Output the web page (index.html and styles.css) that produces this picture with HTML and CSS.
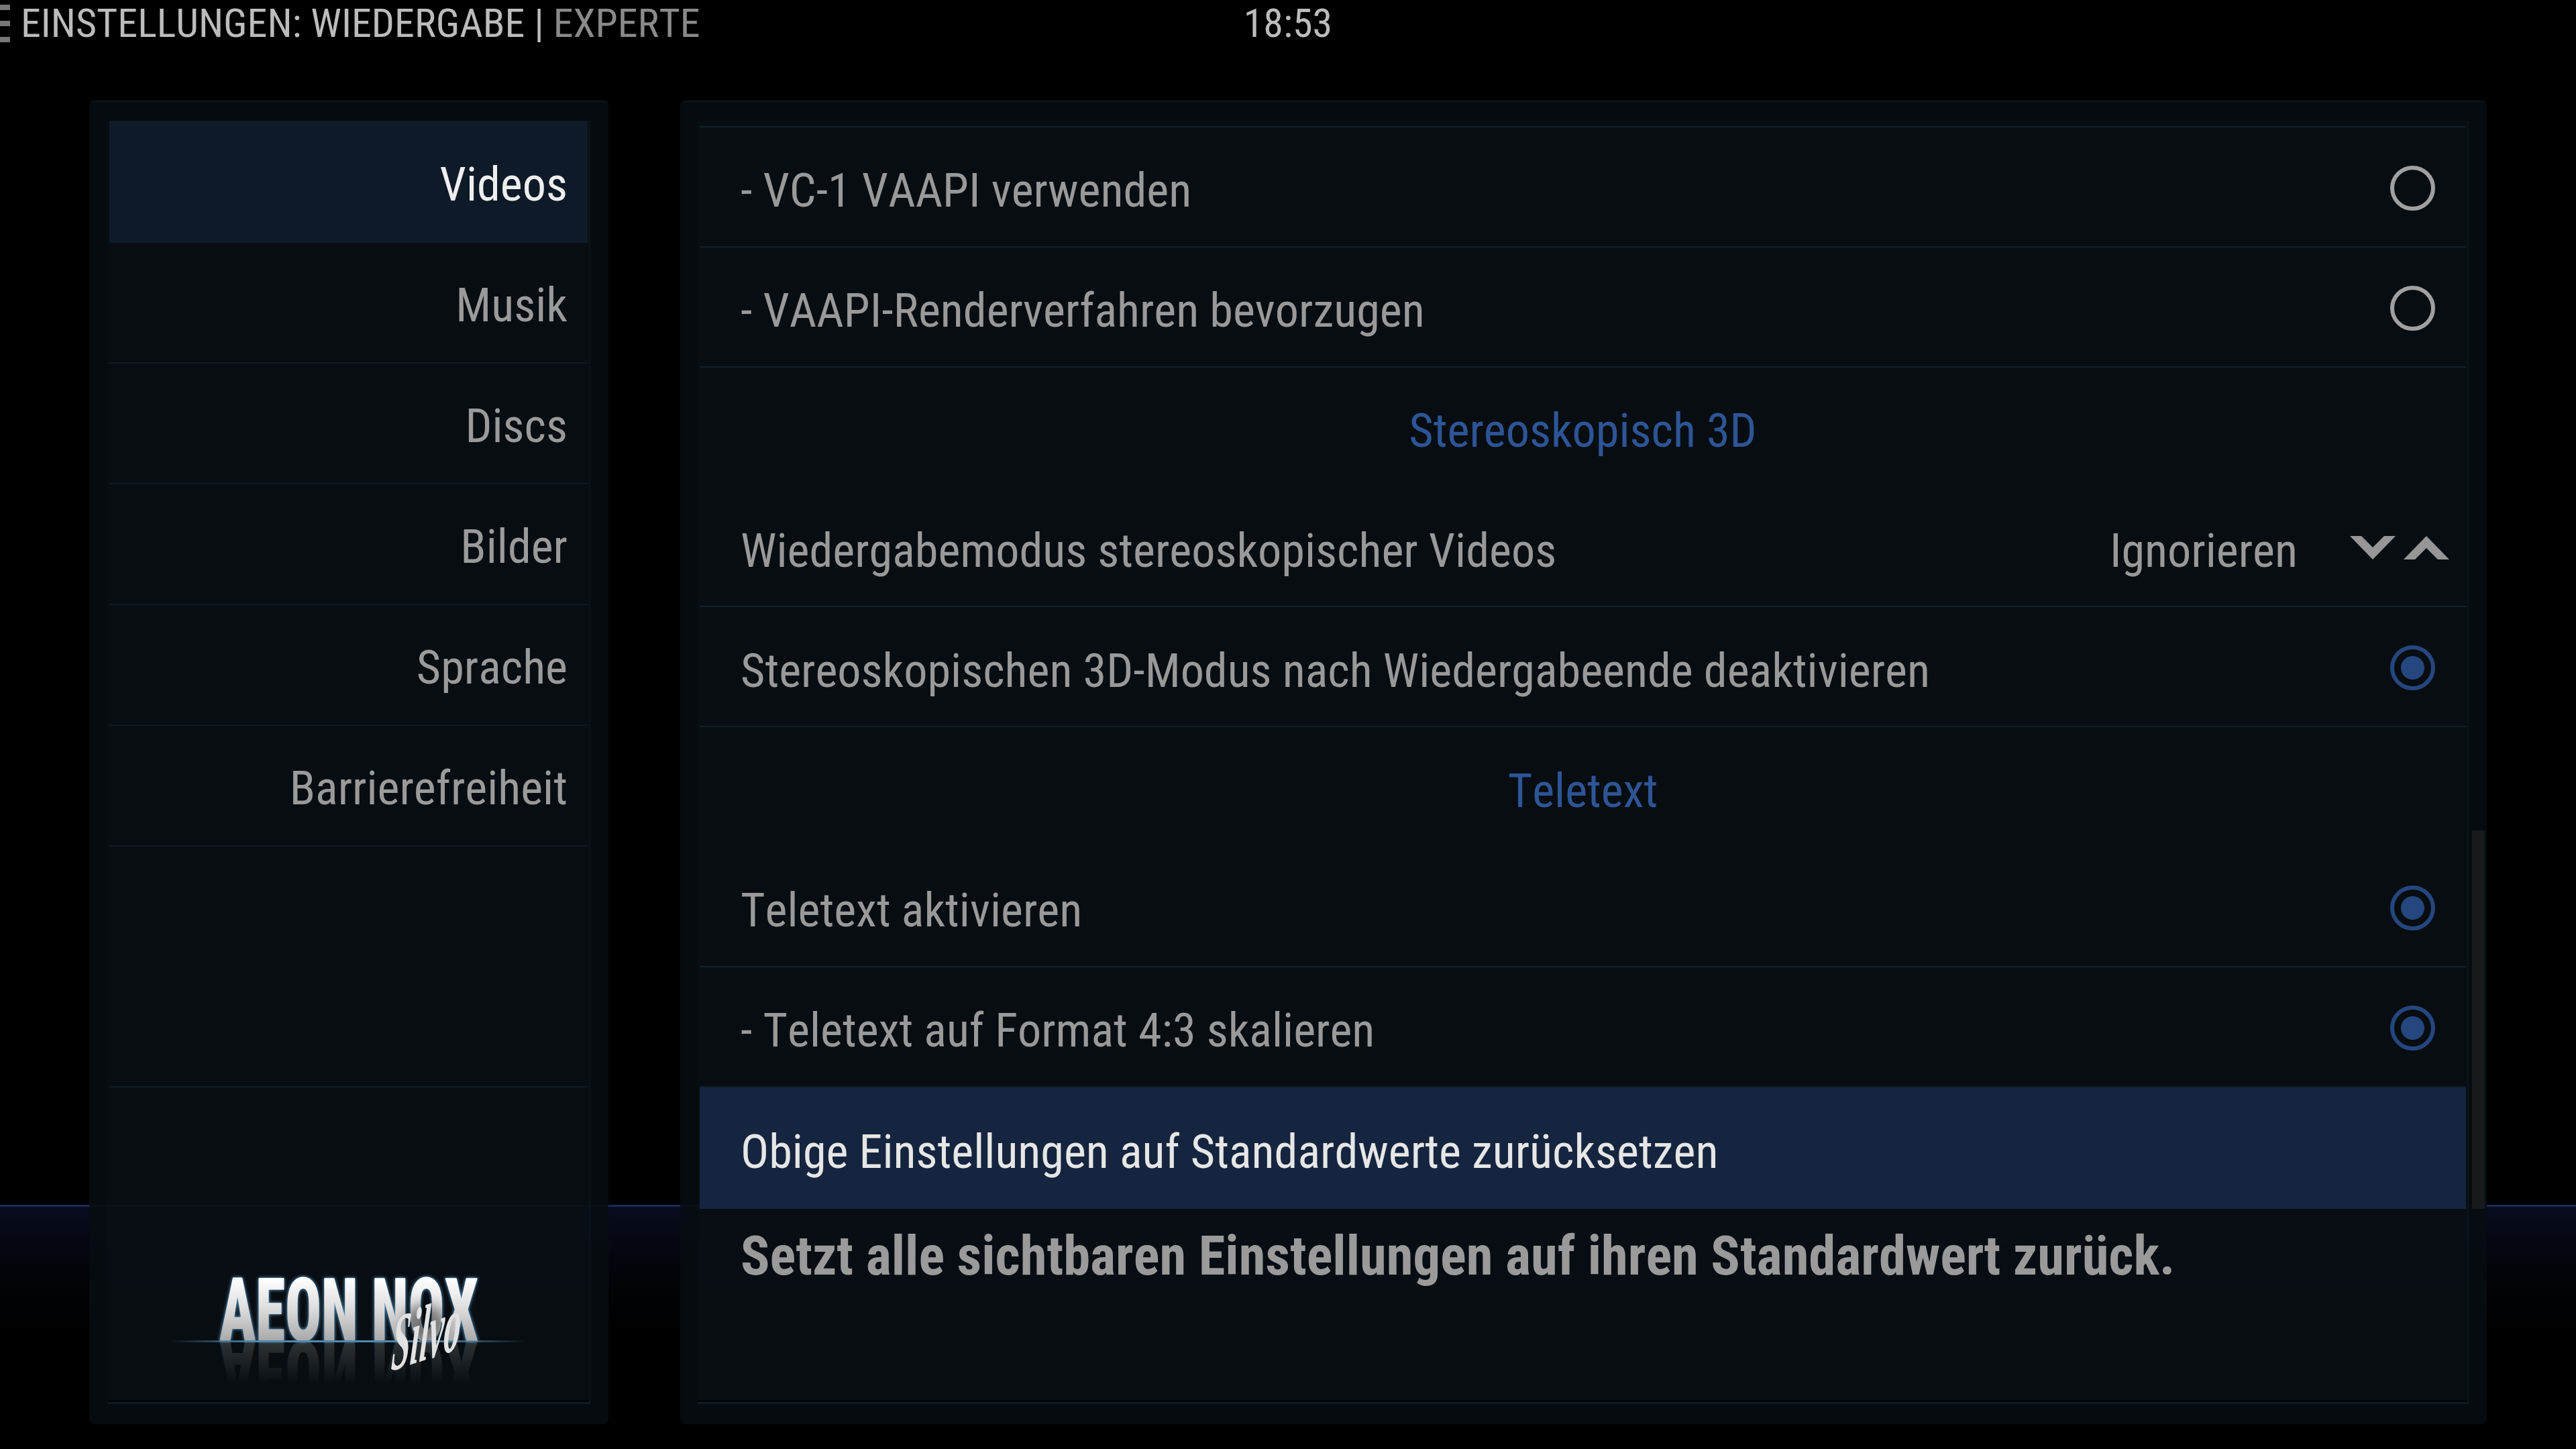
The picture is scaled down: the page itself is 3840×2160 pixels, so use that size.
FILE: index.html
```html
<!DOCTYPE html>
<html lang="de">
<head>
<meta charset="utf-8">
<title>Einstellungen: Wiedergabe</title>
<link rel="stylesheet" href="styles.css">
</head>
<body>
<header class="topbar">
  <div class="topbar-left">
    <div class="burger"><i></i><i></i><i></i></div>
    <div class="title">EINSTELLUNGEN: WIEDERGABE <span class="title-sep">|</span> <span class="title-dim">EXPERTE</span></div>
  </div>
  <div class="clock">18:53</div>
  <div></div>
</header>
<main class="stage">
  <aside class="panel panel-side">
    <div class="box">
      <nav class="menu">
        <div class="menu-item is-active">Videos</div>
        <div class="menu-item">Musik</div>
        <div class="menu-item">Discs</div>
        <div class="menu-item">Bilder</div>
        <div class="menu-item">Sprache</div>
        <div class="menu-item">Barrierefreiheit</div>
        <div class="menu-item menu-blank"></div>
      </nav>
      <svg class="logo" viewBox="163 1619 714 474" aria-label="Aeon Nox Silvo">
        <defs>
          <linearGradient id="face" x1="0" y1="1903" x2="0" y2="1997" gradientUnits="userSpaceOnUse">
            <stop offset="0" stop-color="#ffffff"/><stop offset=".45" stop-color="#e0e0e0"/><stop offset="1" stop-color="#a8a8a8"/>
          </linearGradient>
          <linearGradient id="mirror" x1="0" y1="1997" x2="0" y2="1933" gradientUnits="userSpaceOnUse">
            <stop offset="0" stop-color="#2e3336"/><stop offset="1" stop-color="#2e3336" stop-opacity="0"/>
          </linearGradient>
          <linearGradient id="beam" x1="252" y1="0" x2="783" y2="0" gradientUnits="userSpaceOnUse">
            <stop offset="0" stop-color="#4f89ad" stop-opacity="0"/><stop offset=".25" stop-color="#4f89ad"/><stop offset=".75" stop-color="#4f89ad"/><stop offset="1" stop-color="#4f89ad" stop-opacity="0"/>
          </linearGradient>
          <filter id="glow" x="-10%" y="-20%" width="120%" height="140%"><feDropShadow dx="0" dy="0" stdDeviation="2.5" flood-color="#5fb4ea"/></filter>
          <filter id="soft" x="-50%" y="-50%" width="200%" height="200%"><feGaussianBlur stdDeviation="9"/></filter>
        </defs>
        <text class="logo-word" transform="translate(0 3994) scale(1 -1)" x="327" y="1997" textLength="386" lengthAdjust="spacingAndGlyphs" fill="url(#mirror)">AEON NOX</text>
        <text class="logo-word" x="327" y="1997" textLength="386" lengthAdjust="spacingAndGlyphs" fill="url(#face)" filter="url(#glow)">AEON NOX</text>
        <rect x="252" y="1996" width="531" height="3" fill="url(#beam)"/>
        <ellipse cx="633" cy="1968" rx="30" ry="26" fill="#000" opacity=".4" filter="url(#soft)"/>
        <text class="logo-script" transform="translate(582 2042) rotate(-18) skewX(-22)" textLength="108" lengthAdjust="spacingAndGlyphs" fill="#e2e2e2">Silvo</text>
      </svg>
    </div>
  </aside>
  <section class="panel panel-main">
    <div class="box box-main">
      <div class="rows">
        <div class="row"><span class="label">- VC-1 VAAPI verwenden</span><span class="radio"></span></div>
        <div class="row"><span class="label">- VAAPI-Renderverfahren bevorzugen</span><span class="radio"></span></div>
        <div class="row row-head"><span class="label">Stereoskopisch 3D</span></div>
        <div class="row row-value">
          <span class="label">Wiedergabemodus stereoskopischer Videos</span>
          <span class="label-value">Ignorieren</span>
          <svg class="chevrons" viewBox="0 0 148 35"><path d="M0 0H17L34 17 51 0H68L34 35Z"/><path d="M80 35H97L114 18 131 35H148L114 0Z"/></svg>
        </div>
        <div class="row"><span class="label">Stereoskopischen 3D-Modus nach Wiedergabeende deaktivieren</span><span class="radio is-on"></span></div>
        <div class="row row-head"><span class="label">Teletext</span></div>
        <div class="row"><span class="label">Teletext aktivieren</span><span class="radio is-on"></span></div>
        <div class="row"><span class="label">- Teletext auf Format 4:3 skalieren</span><span class="radio is-on"></span></div>
        <div class="row row-focus"><span class="label">Obige Einstellungen auf Standardwerte zurücksetzen</span></div>
      </div>
      <p class="hint">Setzt alle sichtbaren Einstellungen auf ihren Standardwert zurück.</p>
    </div>
    <div class="scrollbar"></div>
  </section>
</main>
</body>
</html>
```
FILE: styles.css
```css
* { box-sizing: border-box; }
html, body { margin: 0; padding: 0; }
body {
  width: 3840px;
  height: 2160px;
  overflow: hidden;
  font-family: Roboto, "Liberation Sans", sans-serif;
  font-stretch: 75%;
  font-kerning: none;
  background: linear-gradient(#000 0 1796px, #18295a 1796px 1799px, #080c1e 1799px, #03050c 1880px, #000 1980px);
}
.topbar {
  height: 150px;
  display: grid;
  grid-template-columns: 1fr auto 1fr;
  align-items: start;
  font-size: 60px;
  line-height: 70px;
  color: #bcbcbc;
}
.topbar-left { display: flex; gap: 16px; }
.burger { display: flex; flex-direction: column; gap: 16px; padding-top: 7px; }
.burger i { display: block; width: 15px; height: 8px; background: #777; }
.title-sep { color: #bcbcbc; }
.title-dim { color: #8a8a8a; }
.stage { display: flex; height: 1973px; padding-left: 133px; gap: 107px; }
.panel {
  background: rgba(7, 13, 17, .88);
  border-top: 2px solid #0c171e;
  border-radius: 8px;
  padding-top: 28px;
  padding-bottom: 30px;
  height: 1973px;
}
.panel-side { width: 774px; padding-left: 27px; padding-right: 27px; }
.panel-main { width: 2693px; padding-left: 26px; padding-right: 3px; display: flex; }
.box {
  height: 100%;
  display: flex;
  flex-direction: column;
  background: rgba(10, 15, 22, .5);
  border-bottom: 3px solid #0f1b23;
  border-right: 2px solid #0b151b;
  border-left: 1px solid #091116;
  padding: 0 2px;
  box-shadow: inset 0 -3px 0 #030507;
}
.box-main { width: 2640px; flex: none; border-left: 0; padding: 0 2px 0 3px; }

.menu-item {
  height: 180px;
  padding: 8px 30px 0 0;
  display: flex;
  align-items: center;
  justify-content: flex-end;
  font-size: 70.2px;
  color: #9a9a9a;
  border-bottom: 2px solid #0f1a21;
}
.menu-item.is-active { height: 182px; background: #0e1a28; color: #eeeeee; border-bottom: 0; }
.menu-blank { height: 359px; }
.logo { display: block; width: 714px; height: 474px; flex: none; margin-top: auto; }
.logo-word { font-family: Roboto, sans-serif; font-weight: 900; font-size: 132px; }
.logo-script { font-family: "Liberation Serif", serif; font-style: italic; font-weight: 700; font-size: 112px; font-stretch: normal; }

.rows { padding-top: 8px; }
.row {
  height: 178.85px;
  display: flex;
  align-items: center;
  padding: 4px 46px 0 61px;
  font-size: 70.2px;
  color: #999999;
  border-top: 2px solid #11202a;
}
.label { flex: 1; white-space: nowrap; padding-top: 8px; }
.label-value { padding-top: 8px; margin-right: 78px; }
.row-head { text-align: center; color: #2d5596; padding-left: 0; padding-right: 0; }
.row-head + .row { border-top-color: transparent; }
.row-value { padding-right: 25px; }
.chevrons { width: 148px; height: 35px; fill: #969696; flex: none; }
.row-focus {
  height: 183px;
  background: #15253f;
  color: #e6e6e6;
  border-top-color: #0f1c24;
}
.radio {
  width: 67px;
  height: 67px;
  flex: none;
  border-radius: 50%;
  border: 6px solid #a0a0a0;
  background: transparent;
}
.radio.is-on {
  border-color: #25467e;
  background: radial-gradient(circle closest-side, #25467e 0 17px, transparent 18px);
}
.hint {
  margin: 0;
  padding: 21px 0 0 61px;
  font-size: 80.7px;
  line-height: 100px;
  font-weight: 700;
  color: #9a9a9a;
  white-space: nowrap;
}
.scrollbar { width: 19px; height: 564px; flex: none; margin: 1058px 0 0 5px; background: #161a1c; }
```
